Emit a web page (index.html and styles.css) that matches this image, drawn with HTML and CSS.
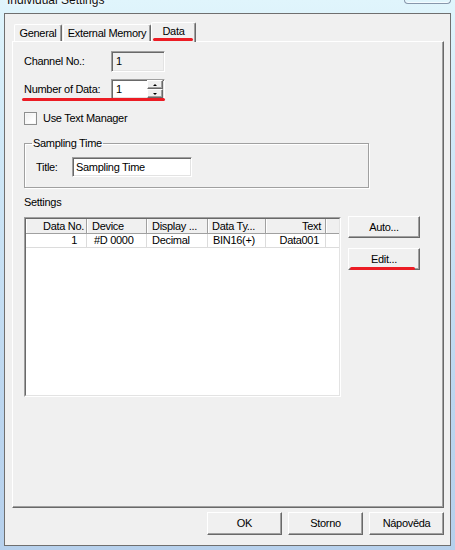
FILE: index.html
```html
<!DOCTYPE html>
<html>
<head>
<meta charset="utf-8">
<link rel="stylesheet" href="styles.css">
</head>
<body>
<div class="window">
  <div class="titlebar">
    <span class="title">Individual Settings</span>
    <span class="close"></span>
  </div>
  <div class="client">
    <div class="tabs">
      <div class="tab tab-general">General</div>
      <div class="tab tab-ext">External Memory</div>
      <div class="tab tab-data active">Data</div>
    </div>
    <div class="panel">
      <div class="row">
        <span class="lbl">Channel No.:</span>
        <div class="edit readonly">1</div>
      </div>
      <div class="row row-number">
        <span class="lbl">Number of Data:</span>
        <div class="edit spin">
          <span class="val">1</span>
          <div class="spin-btns">
            <span class="sb up"><i></i></span>
            <span class="sb down"><i></i></span>
          </div>
        </div>
      </div>
      <div class="check-row">
        <span class="checkbox"></span>
        <span>Use Text Manager</span>
      </div>
      <fieldset class="group">
        <legend>Sampling Time</legend>
        <div class="group-row">
          <span class="lbl-title">Title:</span>
          <div class="edit title-edit">Sampling Time</div>
        </div>
      </fieldset>
      <div class="settings-label">Settings</div>
      <div class="settings">
        <div class="list">
          <div class="list-inner">
            <div class="list-head">
              <span class="c c1 r">Data No.</span>
              <span class="c c2">Device</span>
              <span class="c c3">Display ...</span>
              <span class="c c4">Data Ty...</span>
              <span class="c c5 r">Text</span>
              <span class="c c6"></span>
            </div>
            <div class="list-row">
              <span class="c c1 r">1</span>
              <span class="c c2">#D 0000</span>
              <span class="c c3">Decimal</span>
              <span class="c c4">BIN16(+)</span>
              <span class="c c5 r">Data001</span>
              <span class="c c6"></span>
            </div>
          </div>
        </div>
        <div class="side-btns">
          <div class="btn">Auto...</div>
          <div class="btn btn-edit">Edit...</div>
        </div>
      </div>
    </div>
    <div class="footer">
      <div class="btn fbtn">OK</div>
      <div class="btn fbtn">Storno</div>
      <div class="btn fbtn">Nápověda</div>
    </div>
  </div>
</div>
</body>
</html>
```
FILE: styles.css
```css
* { box-sizing: border-box; }

body {
  margin: 0;
  width: 455px;
  height: 550px;
  overflow: hidden;
  font-family: "Liberation Sans", Arial, sans-serif;
  font-size: 11px;
  line-height: 13px;
  letter-spacing: -0.3px;
  color: #000;
  background: linear-gradient(to bottom, #e0f5fc 0px, #d2eaf8 120px, #bcd6ef 400px, #b6d0ec 550px);
}

.window {
  padding: 0 4px;
}

.titlebar {
  height: 13px;
  display: flex;
  justify-content: space-between;
  overflow: hidden;
}

.title {
  font-size: 12px;
  line-height: 12px;
  letter-spacing: 0;
  margin-top: -6px;
  padding-left: 3px;
  color: #111;
  text-shadow: 0 0 6px #fff, 0 0 3px #fff;
}

.close {
  width: 47px;
  height: 4px;
  border: 1px solid #8797ab;
  border-top: none;
  border-radius: 0 0 4px 4px;
  box-shadow: inset 0 -1px 0 #f4fbff;
}

.client {
  width: 447px;
  height: 533px;
  border: 1px solid #6f6f6f;
  background: #f0f0f0;
  padding: 8px 6px 0 7px;
}

/* tabs */
.tabs {
  display: flex;
  align-items: flex-end;
  height: 19px;
  position: relative;
  z-index: 1;
}

.tab {
  height: 17px;
  border-top: 1px solid #fff;
  border-left: 1px solid #fff;
  border-right: 1px solid #696969;
  border-radius: 2px 2px 0 0;
  box-shadow: inset -1px 0 0 #a0a0a0;
  text-align: center;
  line-height: 16px;
  background: #f0f0f0;
}

.tab-general { margin-left: 2px; width: 48px; }
.tab-ext { margin-left: 1px; width: 88px; }

.tab-data.active {
  width: 45px;
  height: 20px;
  margin-bottom: -1px;
  line-height: 17px;
  position: relative;
}

.tab-data.active::after {
  content: "";
  position: absolute;
  left: 1px;
  top: 15px;
  width: 40px;
  height: 3px;
  border-radius: 2px;
  background: #ec1c24;
}

/* panel */
.panel {
  width: 432px;
  height: 467px;
  border-top: 1px solid #fff;
  border-left: 1px solid #fff;
  border-right: 1px solid #696969;
  border-bottom: 1px solid #696969;
  box-shadow: inset -1px -1px 0 #a0a0a0;
  padding: 9px 0 0 11px;
}

.row {
  display: flex;
  align-items: center;
  position: relative;
}

.lbl { width: 87px; }

.edit {
  border: 1px solid;
  border-color: #a0a0a0 #fff #fff #a0a0a0;
  box-shadow: inset 1px 1px 0 #696969, inset -1px -1px 0 #e3e3e3;
  display: flex;
  align-items: center;
}

.readonly {
  width: 54px;
  height: 21px;
  padding-left: 4px;
  background: #f0f0f0;
}

.row-number { margin-top: 7px; }

.row-number::after {
  content: "";
  position: absolute;
  left: -2px;
  top: 19px;
  width: 143px;
  height: 3px;
  border-radius: 2px;
  background: #ec1c24;
}

.spin {
  width: 54px;
  height: 20px;
  background: #fff;
  padding: 0 1px 0 4px;
}

.spin .val { flex: 1; }

.spin-btns {
  display: flex;
  flex-direction: column;
  width: 16px;
  height: 18px;
}

.sb {
  flex: 1;
  display: flex;
  align-items: center;
  justify-content: center;
  background: #f0f0f0;
  border: 1px solid;
  border-color: #fff #696969 #696969 #fff;
  box-shadow: inset -1px -1px 0 #a0a0a0;
}

.sb i {
  display: block;
  width: 0;
  height: 0;
  border-left: 2px solid transparent;
  border-right: 2px solid transparent;
}

.sb.up i { border-bottom: 2px solid #000; }
.sb.down i { border-top: 2px solid #000; }

/* checkbox */
.check-row {
  display: flex;
  align-items: center;
  margin-top: 13px;
  height: 13px;
}

.checkbox {
  width: 13px;
  height: 13px;
  margin-right: 6px;
  border: 1px solid #8e8f8f;
  background: linear-gradient(135deg, #ececec, #fff 70%);
  box-shadow: inset 0 0 0 1px #f8f8f8;
}

/* group box */
.group {
  margin: 12px 0 0 0;
  padding: 0;
  width: 345px;
  height: 51px;
  border: 1px solid #a0a0a0;
  box-shadow: inset 1px 1px 0 #fff, 1px 1px 0 #fff;
  min-width: 0;
}

.group legend {
  margin-left: 7px;
  padding: 0 1px;
  line-height: 13px;
}

.group-row {
  display: flex;
  align-items: center;
  margin-top: 7px;
  padding-left: 11px;
}

.lbl-title { width: 36px; }

.title-edit {
  width: 120px;
  height: 20px;
  background: #fff;
  padding-left: 3px;
}

.settings-label {
  margin-top: 8px;
}

.settings {
  display: flex;
  align-items: flex-start;
  margin-top: 7px;
}

.list {
  margin-top: 1px;
  width: 317px;
  height: 180px;
  border: 1px solid;
  border-color: #a0a0a0 #fff #fff #a0a0a0;
}

.list-inner {
  height: 100%;
  border: 1px solid;
  border-color: #696969 #e3e3e3 #e3e3e3 #696969;
  background: #fff;
}

.list-head, .list-row {
  display: flex;
}

.list-head {
  height: 15px;
  background: #f0f0f0;
  border-bottom: 1px solid #a0a0a0;
}

.list-head .c {
  border-right: 1px solid #a0a0a0;
  box-shadow: inset 1px 0 0 #fff;
  line-height: 14px;
  white-space: nowrap;
  overflow: hidden;
}

.list-row {
  height: 14px;
  border-bottom: 1px solid #dcdcdc;
}

.list-row .c {
  border-right: 1px solid #dcdcdc;
  line-height: 13px;
  white-space: nowrap;
}

.c1 { width: 61px; }
.c2 { width: 60px; }
.c3 { width: 61px; }
.c4 { width: 58px; }
.c5 { width: 60px; }
.c6 { flex: 1; }
.list-head .c6 { border-right: none; }
.list-row .c6 { border-right: none; }

.r { text-align: right; }

.list-head .c1 { padding-right: 2px; }
.list-head .c2 { padding-left: 5px; }
.list-head .c3 { padding-left: 5px; }
.list-head .c4 { padding-left: 4px; }
.list-head .c5 { padding-right: 4px; }

.list-row .c1 { padding-right: 9px; }
.list-row .c2 { padding-left: 7px; }
.list-row .c3 { padding-left: 5px; }
.list-row .c4 { padding-left: 5px; }
.list-row .c5 { padding-right: 6px; }

.side-btns {
  display: flex;
  flex-direction: column;
  gap: 10px;
  margin-left: 7px;
}

.btn {
  width: 72px;
  height: 22px;
  display: flex;
  align-items: center;
  justify-content: center;
  background: #f0f0f0;
  border: 1px solid;
  border-color: #fff #696969 #696969 #fff;
  box-shadow: inset -1px -1px 0 #a0a0a0;
}

.btn-edit { position: relative; }

.btn-edit::after {
  content: "";
  position: absolute;
  left: 1px;
  top: 18px;
  width: 65px;
  height: 3px;
  border-radius: 2px;
  background: #ec1c24;
}

.footer {
  display: flex;
  justify-content: flex-end;
  gap: 6px;
  margin-top: 4px;
  width: 432px;
}

.fbtn {
  width: 75px;
  height: 23px;
}
```
